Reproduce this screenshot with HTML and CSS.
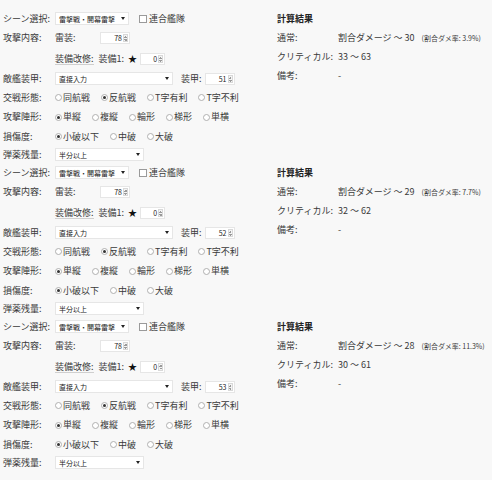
FILE: index.html
```html
<!DOCTYPE html>
<html lang="ja">
<head>
<meta charset="utf-8">
<title>雷撃戦計算</title>
<link rel="stylesheet" href="styles.css">
</head>
<body>
<div class="page">

<!-- block 1 -->
<section class="block">
  <div class="form">
    <div class="row">
      <span class="label">シーン選択:</span>
      <span class="select w-scene">雷撃戦・開幕雷撃<i class="arrow"></i></span>
      <span class="check"></span><span>連合艦隊</span>
    </div>
    <div class="attack">
      <span class="label">攻撃内容:</span>
      <div class="sub">
        <div class="row tall"><span class="sublabel">雷装:</span><span class="num w78">78<i class="spin"></i></span></div>
        <div class="row taller"><span class="sublabel ul">装備改修:</span><span>装備1:</span><span class="star">★</span><span class="num w0">0<i class="spin"></i></span></div>
      </div>
    </div>
    <div class="row">
      <span class="label">敵艦装甲:</span>
      <span class="select w-armor">直接入力<i class="arrow"></i></span>
      <span class="armor-label">装甲:</span><span class="num w51">51<i class="spin"></i></span>
    </div>
    <div class="row">
      <span class="label">交戦形態:</span>
      <span class="opt"><i class="radio"></i>同航戦</span>
      <span class="opt"><i class="radio on"></i>反航戦</span>
      <span class="opt"><i class="radio"></i>T字有利</span>
      <span class="opt"><i class="radio"></i>T字不利</span>
    </div>
    <div class="row tall">
      <span class="label">攻撃陣形:</span>
      <span class="opt"><i class="radio on"></i>単縦</span>
      <span class="opt"><i class="radio"></i>複縦</span>
      <span class="opt"><i class="radio"></i>輪形</span>
      <span class="opt"><i class="radio"></i>梯形</span>
      <span class="opt"><i class="radio"></i>単横</span>
    </div>
    <div class="row">
      <span class="label">損傷度:</span>
      <span class="opt"><i class="radio on"></i>小破以下</span>
      <span class="opt"><i class="radio"></i>中破</span>
      <span class="opt"><i class="radio"></i>大破</span>
    </div>
    <div class="row short">
      <span class="label">弾薬残量:</span>
      <span class="select w-ammo">半分以上<i class="arrow"></i></span>
    </div>
  </div>
  <div class="result">
    <div class="row"><b class="title">計算結果</b></div>
    <div class="row"><span class="rlabel">通常:</span><span>割合ダメージ ～ 30</span><small class="rate">(割合ダメ率: 3.9%)</small></div>
    <div class="row"><span class="rlabel">クリティカル:</span><span>33 ～ 63</span></div>
    <div class="row"><span class="rlabel">備考:</span><span>-</span></div>
  </div>
</section>

<!-- block 2 -->
<section class="block">
  <div class="form">
    <div class="row">
      <span class="label">シーン選択:</span>
      <span class="select w-scene">雷撃戦・開幕雷撃<i class="arrow"></i></span>
      <span class="check"></span><span>連合艦隊</span>
    </div>
    <div class="attack">
      <span class="label">攻撃内容:</span>
      <div class="sub">
        <div class="row tall"><span class="sublabel">雷装:</span><span class="num w78">78<i class="spin"></i></span></div>
        <div class="row taller"><span class="sublabel ul">装備改修:</span><span>装備1:</span><span class="star">★</span><span class="num w0">0<i class="spin"></i></span></div>
      </div>
    </div>
    <div class="row">
      <span class="label">敵艦装甲:</span>
      <span class="select w-armor">直接入力<i class="arrow"></i></span>
      <span class="armor-label">装甲:</span><span class="num w51">52<i class="spin"></i></span>
    </div>
    <div class="row">
      <span class="label">交戦形態:</span>
      <span class="opt"><i class="radio"></i>同航戦</span>
      <span class="opt"><i class="radio on"></i>反航戦</span>
      <span class="opt"><i class="radio"></i>T字有利</span>
      <span class="opt"><i class="radio"></i>T字不利</span>
    </div>
    <div class="row tall">
      <span class="label">攻撃陣形:</span>
      <span class="opt"><i class="radio on"></i>単縦</span>
      <span class="opt"><i class="radio"></i>複縦</span>
      <span class="opt"><i class="radio"></i>輪形</span>
      <span class="opt"><i class="radio"></i>梯形</span>
      <span class="opt"><i class="radio"></i>単横</span>
    </div>
    <div class="row">
      <span class="label">損傷度:</span>
      <span class="opt"><i class="radio on"></i>小破以下</span>
      <span class="opt"><i class="radio"></i>中破</span>
      <span class="opt"><i class="radio"></i>大破</span>
    </div>
    <div class="row short">
      <span class="label">弾薬残量:</span>
      <span class="select w-ammo">半分以上<i class="arrow"></i></span>
    </div>
  </div>
  <div class="result">
    <div class="row"><b class="title">計算結果</b></div>
    <div class="row"><span class="rlabel">通常:</span><span>割合ダメージ ～ 29</span><small class="rate">(割合ダメ率: 7.7%)</small></div>
    <div class="row"><span class="rlabel">クリティカル:</span><span>32 ～ 62</span></div>
    <div class="row"><span class="rlabel">備考:</span><span>-</span></div>
  </div>
</section>

<!-- block 3 -->
<section class="block">
  <div class="form">
    <div class="row">
      <span class="label">シーン選択:</span>
      <span class="select w-scene">雷撃戦・開幕雷撃<i class="arrow"></i></span>
      <span class="check"></span><span>連合艦隊</span>
    </div>
    <div class="attack">
      <span class="label">攻撃内容:</span>
      <div class="sub">
        <div class="row tall"><span class="sublabel">雷装:</span><span class="num w78">78<i class="spin"></i></span></div>
        <div class="row taller"><span class="sublabel ul">装備改修:</span><span>装備1:</span><span class="star">★</span><span class="num w0">0<i class="spin"></i></span></div>
      </div>
    </div>
    <div class="row">
      <span class="label">敵艦装甲:</span>
      <span class="select w-armor">直接入力<i class="arrow"></i></span>
      <span class="armor-label">装甲:</span><span class="num w51">53<i class="spin"></i></span>
    </div>
    <div class="row">
      <span class="label">交戦形態:</span>
      <span class="opt"><i class="radio"></i>同航戦</span>
      <span class="opt"><i class="radio on"></i>反航戦</span>
      <span class="opt"><i class="radio"></i>T字有利</span>
      <span class="opt"><i class="radio"></i>T字不利</span>
    </div>
    <div class="row tall">
      <span class="label">攻撃陣形:</span>
      <span class="opt"><i class="radio on"></i>単縦</span>
      <span class="opt"><i class="radio"></i>複縦</span>
      <span class="opt"><i class="radio"></i>輪形</span>
      <span class="opt"><i class="radio"></i>梯形</span>
      <span class="opt"><i class="radio"></i>単横</span>
    </div>
    <div class="row">
      <span class="label">損傷度:</span>
      <span class="opt"><i class="radio on"></i>小破以下</span>
      <span class="opt"><i class="radio"></i>中破</span>
      <span class="opt"><i class="radio"></i>大破</span>
    </div>
    <div class="row short">
      <span class="label">弾薬残量:</span>
      <span class="select w-ammo">半分以上<i class="arrow"></i></span>
    </div>
  </div>
  <div class="result">
    <div class="row"><b class="title">計算結果</b></div>
    <div class="row"><span class="rlabel">通常:</span><span>割合ダメージ ～ 28</span><small class="rate">(割合ダメ率: 11.3%)</small></div>
    <div class="row"><span class="rlabel">クリティカル:</span><span>30 ～ 61</span></div>
    <div class="row"><span class="rlabel">備考:</span><span>-</span></div>
  </div>
</section>

</div>
</body>
</html>
```

FILE: styles.css
```css
html, body {
  margin: 0;
  padding: 0;
}
body {
  background: #f8f8f8;
  color: #3a3a3a;
  font-family: "Noto Sans CJK JP", "Noto Sans", sans-serif;
  font-size: 9px;
  line-height: 12px;
}
.page {
  padding: 9px 0 0 3px;
}
.block {
  display: flex;
  height: 154px;
}
.form {
  width: 274px;
  display: flex;
  flex-direction: column;
}
.row {
  display: flex;
  align-items: center;
  height: 19px;
  white-space: nowrap;
}
.row.tall { height: 20px; }
.row.taller { height: 21px; }
.row.short { height: 17px; }

.label {
  width: 52px;
  flex: none;
}
.attack {
  display: flex;
}
.attack .label {
  height: 20px;
  display: flex;
  align-items: center;
}
.sub {
  display: flex;
  flex-direction: column;
}
.sublabel {
  width: 45px;
  flex: none;
}
.ul {
  width: auto;
  margin-right: 5px;
  border-bottom: 1px solid #cfcfcf;
  line-height: 11px;
}

.select {
  display: inline-flex;
  align-items: center;
  justify-content: space-between;
  box-sizing: border-box;
  height: 13px;
  padding: 0 3px 0 3px;
  background: #fff;
  border: 1px solid #e6e6e6;
  font-size: 7px;
  color: #222;
}
.w-scene { width: 74px; }
.w-armor { width: 118px; }
.w-ammo { width: 89px; }
.arrow {
  width: 0;
  height: 0;
  border-left: 2px solid transparent;
  border-right: 2px solid transparent;
  border-top: 3px solid #222;
}

.check {
  width: 8px;
  height: 8px;
  box-sizing: border-box;
  border: 1px solid #9a9a9a;
  background: #fff;
  margin: 0 2px 0 10px;
}

.num {
  display: inline-flex;
  align-items: center;
  justify-content: flex-end;
  box-sizing: border-box;
  height: 12px;
  background: #fff;
  border: 1px solid #e6e6e6;
  font-size: 7px;
  color: #222;
}
.w78 { width: 30px; }
.w0 { width: 25px; }
.w51 { width: 30px; }
.spin {
  width: 5px;
  height: 8px;
  margin: 0 1px 0 1px;
  box-sizing: border-box;
  border: 1px solid #d8d8d8;
  background:
    linear-gradient(135deg, transparent 50%, #999 50%) no-repeat 0 1px / 2px 2px,
    linear-gradient(225deg, transparent 50%, #999 50%) no-repeat 1.5px 1px / 2px 2px,
    linear-gradient(45deg, transparent 50%, #999 50%) no-repeat 0 4px / 2px 2px,
    linear-gradient(315deg, transparent 50%, #999 50%) no-repeat 1.5px 4px / 2px 2px,
    #f4f4f4;
}
.star {
  margin: 0 3px 0 4px;
  font-size: 9px;
  color: #111;
}
.armor-label {
  margin: 0 3px 0 8px;
}

.opt {
  display: inline-flex;
  align-items: center;
  margin-right: 11px;
}
.radio {
  display: inline-flex;
  align-items: center;
  justify-content: center;
  width: 7px;
  height: 7px;
  box-sizing: border-box;
  border: 1px solid #b0b0b0;
  border-radius: 50%;
  background: #fff;
  margin-right: 1px;
}
.radio.on::after {
  content: "";
  width: 3px;
  height: 3px;
  border-radius: 50%;
  background: #333;
}

.result {
  display: flex;
  flex-direction: column;
}
.title {
  font-weight: bold;
  color: #222;
}
.rlabel {
  width: 61px;
  flex: none;
}
.rate {
  font-size: 7px;
  margin-left: 7px;
}
```
